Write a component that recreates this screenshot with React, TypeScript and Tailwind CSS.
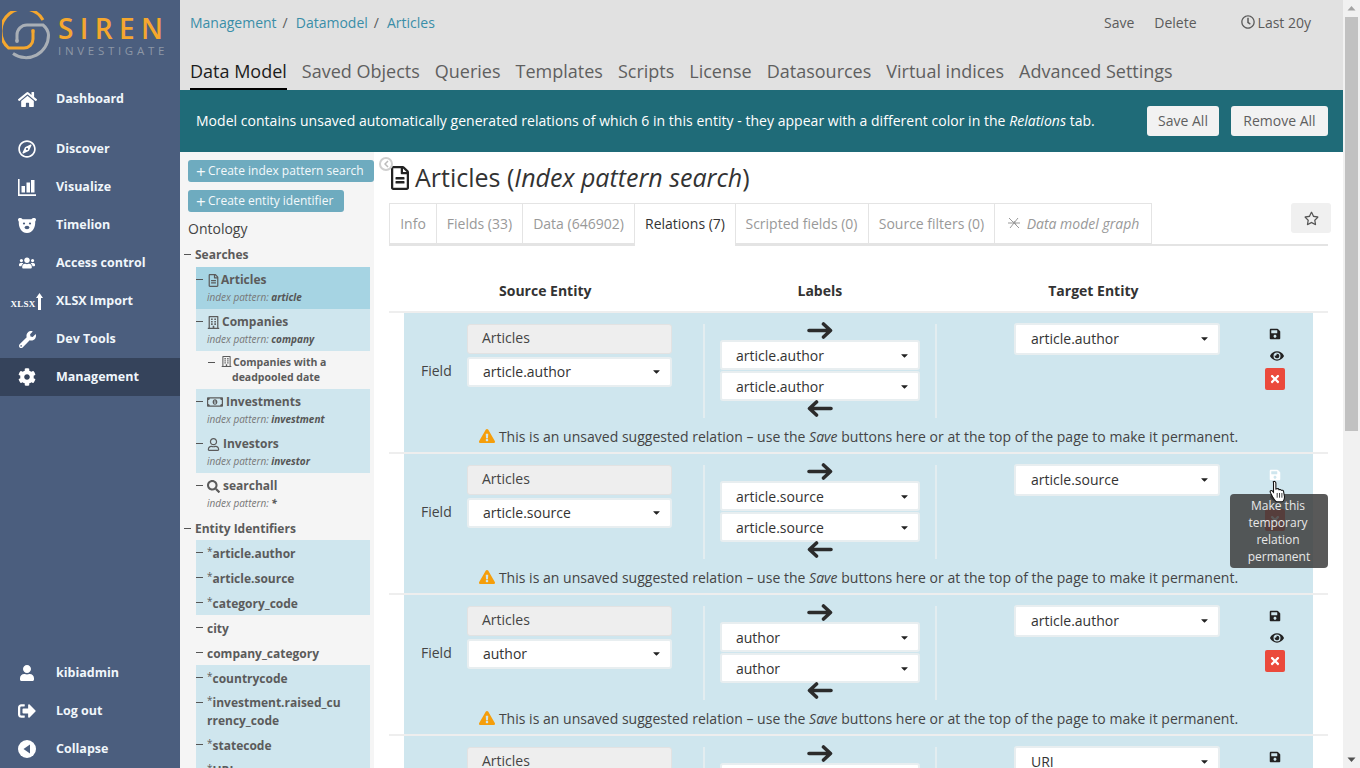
import {
  FaCaretDown,
  FaCog,
  FaExclamationTriangle,
  FaEye,
  FaHome,
  FaRegBuilding,
  FaRegClock,
  FaRegCompass,
  FaRegFileAlt,
  FaRegMoneyBillAlt,
  FaRegStar,
  FaRegUser,
  FaSave,
  FaSearch,
  FaSignOutAlt,
  FaTimes,
  FaUser,
  FaUsers,
  FaWrench,
} from "react-icons/fa";
import type { ReactNode } from "react";

function BarsIcon() {
  return (
    <svg width="18" height="17" viewBox="0 0 18 17" fill="#fff">
      <path d="M0 0h1.600v15.200H18V17H0z" />
      <rect x="3.500" y="7" width="3.500" height="6.500" />
      <rect x="8.500" y="3.500" width="3.500" height="10" />
      <rect x="13" y="1" width="3.500" height="12.500" />
    </svg>
  );
}

function BearIcon() {
  return (
    <svg width="18" height="15" viewBox="0 0 18 15" fill="#fff">
      <path d="M0 1.500C0 .5 1 0 2 0c1 0 2 .6 2.600 1.200h8.800C14 .6 15 0 16 0c1 0 2 .5 2 1.500 0 1-.6 1.600-.8 2.200.3 5-2.200 11.300-8.200 11.300S.5 8.700.8 3.700C.6 3.100 0 2.500 0 1.500z" />
      <circle cx="6" cy="5.500" r="1.100" fill="#4b5e7e" />
      <circle cx="12" cy="5.500" r="1.100" fill="#4b5e7e" />
      <ellipse cx="9" cy="9.500" rx="2.400" ry="1.700" fill="#4b5e7e" />
    </svg>
  );
}

function CollapseIcon() {
  return (
    <svg width="18" height="18" viewBox="0 0 18 18">
      <circle cx="9" cy="9" r="9" fill="#fff" />
      <path d="M12 4.500v9L5.500 9z" fill="#4b5e7e" />
    </svg>
  );
}

function XlsxIcon() {
  return (
    <span className="flex items-end">
      <span className="font-['Liberation_Serif',serif] text-[9px] leading-[12px] font-bold tracking-[0.2px] text-white">
        XLSX
      </span>
      <svg width="7" height="17" viewBox="0 0 7 17" fill="#fff" className="ml-px">
        <path d="M3.500 0 7 5H5v12H2V5H0z" />
      </svg>
    </span>
  );
}

function SirenLogo() {
  return (
    <div className="flex h-[80px] items-start pl-[2px] pt-[11px]">
      <svg width="49" height="49" viewBox="0 0 49 49" fill="none" className="shrink-0">
        <path d="M41 9A22.500 22.500 0 1 0 6.500 37H22a9 9 0 0 0 9-9v-7" stroke="#f5a72e" strokeWidth="3" />
        <circle cx="31" cy="20" r="1.900" fill="#f5a72e" />
        <path d="M15 30v-6a10 10 0 0 1 10-10h16q5 4 5.500 10A22.500 22.500 0 0 1 11 42.500" stroke="#a9afb6" strokeWidth="3" />
        <circle cx="15" cy="30" r="1.900" fill="#a9afb6" />
      </svg>
      <div className="ml-[7px] flex flex-col pt-[1px]">
        <span className="text-[28px] leading-[32px] font-semibold tracking-[6.400px] text-[#f5a72e]">
          SIREN
        </span>
        <span className="text-[11.500px] leading-[14px] tracking-[3.700px] text-[#8d97a6]">
          INVESTIGATE
        </span>
      </div>
    </div>
  );
}

function NavItem({ icon, label, active }: { icon: ReactNode; label: string; active?: boolean }) {
  return (
    <div className={`flex h-[38px] items-center text-[12.500px] font-bold text-[#f0f6fb] ${active ? "bg-[#35435b]" : ""}`}>
      <span className="flex w-[56px] shrink-0 justify-center pr-[2px]">{icon}</span>
      <span>{label}</span>
    </div>
  );
}

function Sidebar() {
  return (
    <aside className="flex h-full w-[180px] shrink-0 flex-col justify-between bg-[#4b5e7e]">
      <div>
        <SirenLogo />
        <NavItem icon={<FaHome size={19} color="#fff" />} label="Dashboard" />
        <div className="h-[12px]" />
        <NavItem icon={<FaRegCompass size={18} color="#fff" />} label="Discover" />
        <NavItem icon={<BarsIcon />} label="Visualize" />
        <NavItem icon={<BearIcon />} label="Timelion" />
        <NavItem icon={<FaUsers size={16} color="#fff" />} label="Access control" />
        <NavItem icon={<XlsxIcon />} label="XLSX Import" />
        <NavItem icon={<FaWrench size={17} color="#fff" />} label="Dev Tools" />
        <NavItem icon={<FaCog size={18} color="#fff" />} label="Management" active />
      </div>
      <div>
        <NavItem icon={<FaUser size={16} color="#fff" />} label="kibiadmin" />
        <NavItem icon={<FaSignOutAlt size={18} color="#fff" />} label="Log out" />
        <NavItem icon={<CollapseIcon />} label="Collapse" />
      </div>
    </aside>
  );
}

function TopBar() {
  const tabs = ["Saved Objects", "Queries", "Templates", "Scripts", "License", "Datasources", "Virtual indices", "Advanced Settings"];
  return (
    <div className="h-[90px] shrink-0 bg-[#e1e1e1] pl-[10px]">
      <div className="flex h-[45px] items-center pb-px text-[14px] text-[#5b5b5b]">
        <span className="text-[#3a8ea8]">Management</span>
        <span className="ml-[6px]">/</span>
        <span className="ml-[8px] text-[#3a8ea8]">Datamodel</span>
        <span className="ml-[6px]">/</span>
        <span className="ml-[8px] text-[#3a8ea8]">Articles</span>
        <span className="ml-auto">Save</span>
        <span className="ml-[20px]">Delete</span>
        <span className="ml-[44px] flex items-center gap-[3px]">
          <FaRegClock size={14} />
          Last 20y
        </span>
        <span className="w-[32px]" />
      </div>
      <div className="mt-[12px] flex gap-[15px] text-[18px] leading-[28px] text-[#5f5f5f]">
        <span className="relative text-[#1c1c1c]">
          Data Model
          <span className="absolute -bottom-[5px] left-0 h-[2px] w-full bg-black" />
        </span>
        {tabs.map((t) => (
          <span key={t}>{t}</span>
        ))}
      </div>
    </div>
  );
}

function Banner() {
  return (
    <div className="flex h-[62px] shrink-0 items-center justify-between bg-[#1f6b78] pl-[16px] pr-[15px] text-[14px] text-white">
      <span className="-mt-[2px] tracking-[0.03px]">
        Model contains unsaved automatically generated relations of which 6 in this entity - they appear with a different color in the <i>Relations</i> tab.
      </span>
      <div className="flex gap-[12px] text-[#5f5f5f]">
        <span className="flex h-[30px] w-[72px] items-center justify-center rounded-[3px] bg-[#f2f2f2] pb-[2px]">Save All</span>
        <span className="flex h-[30px] w-[97px] items-center justify-center rounded-[3px] bg-[#f2f2f2] pb-[2px]">Remove All</span>
      </div>
    </div>
  );
}

function Dash({ className = "" }: { className?: string }) {
  return <span className={`absolute h-px w-[7px] bg-[#555] ${className}`} />;
}

function SearchItem({
  icon,
  label,
  pattern,
  tone,
}: {
  icon: ReactNode;
  label: string;
  pattern: string;
  tone: string;
}) {
  return (
    <div className={`relative h-[42px] pl-[11px] pt-[3px] ${tone}`}>
      <Dash className="left-0 top-[12px]" />
      <div className="flex h-[20px] items-center gap-[1px] text-[12px] font-bold text-[#5b5b5b]">
        {icon}
        <span>{label}</span>
      </div>
      <div className="text-[10px] leading-[14px] italic text-[#777]">
        index pattern: <b className="text-[#555]">{pattern}</b>
      </div>
    </div>
  );
}

function IdItem({ label, star, tone, tall }: { label: string; star?: boolean; tone?: string; tall?: boolean }) {
  return (
    <div className={`relative whitespace-pre-line pl-[11px] text-[12px] font-bold leading-[17px] text-[#5b5b5b] ${tall ? "h-[42px] pt-[4px]" : "h-[25px] pt-[5px]"} ${tone ?? ""}`}>
      <Dash className="left-0 top-[12px]" />
      {star && <span className="relative -top-[3px] text-[10px] font-normal">*</span>}
      {label}
    </div>
  );
}

function Ontology() {
  const blue = "bg-[#cfe6ee]";
  return (
    <div className="h-full w-[194px] shrink-0 overflow-hidden bg-[#f5f5f5] pl-[8px] pt-[8px] text-[12px]">
      <div className="flex h-[22px] w-[186px] items-center rounded-[3px] bg-[#6eabbf] pl-[8px] text-[#f4f9fb]">
        <span className="mr-[3px] w-[9px] text-[17px] leading-none">+</span>Create index pattern search
      </div>
      <div className="mt-[8px] flex h-[22px] w-[156px] items-center rounded-[3px] bg-[#6eabbf] pl-[8px] text-[#f4f9fb]">
        <span className="mr-[3px] w-[9px] text-[17px] leading-none">+</span>Create entity identifier
      </div>
      <div className="mt-[7px] h-[20px] text-[14px] leading-[20px] text-[#444]">Ontology</div>
      <div className="relative mt-[6px] h-[22px] pl-[7px] text-[12px] leading-[19px] font-bold text-[#5b5b5b]">
        <Dash className="-left-[4px] top-[9px]" />
        Searches
      </div>
      <div className="ml-[8px] w-[174px]">
        <SearchItem tone="bg-[#a6d4e3]" icon={<FaRegFileAlt size={13} />} label="Articles" pattern="article" />
        <SearchItem tone={blue} icon={<FaRegBuilding size={13} className="mr-px" />} label="Companies" pattern="company" />
        <div className="relative h-[38px] pl-[25px] pt-[4px] text-[10.500px] leading-[15px] font-bold text-[#5b5b5b]">
          <Dash className="left-[12px] top-[11px]" />
          <FaRegBuilding size={11} className="mr-px inline align-[-1px]" />
          Companies with a
          <div className="pl-[11px]">deadpooled date</div>
        </div>
        <SearchItem tone={blue} icon={<FaRegMoneyBillAlt size={16} className="mr-[2px]" />} label="Investments" pattern="investment" />
        <SearchItem tone={blue} icon={<FaRegUser size={13} className="mr-[2px]" />} label="Investors" pattern="investor" />
        <SearchItem tone="" icon={<FaSearch size={13} className="mr-[2px]" />} label="searchall" pattern="*" />
      </div>
      <div className="relative mt-[4px] h-[21px] pl-[7px] text-[12px] leading-[20px] font-bold text-[#5b5b5b]">
        <Dash className="-left-[4px] top-[9px]" />
        Entity Identifiers
      </div>
      <div className="ml-[8px] w-[174px]">
        <IdItem star label="article.author" tone={blue} />
        <IdItem star label="article.source" tone={blue} />
        <IdItem star label="category_code" tone={blue} />
        <IdItem label="city" />
        <IdItem label="company_category" />
        <IdItem star label="countrycode" tone={blue} />
        <IdItem star tall label={"investment.raised_cu\nrrency_code"} tone={blue} />
        <IdItem star label="statecode" tone={blue} />
        <IdItem star label="URL" tone={blue} />
      </div>
    </div>
  );
}

function SelectBox({ value, className = "" }: { value: string; className?: string }) {
  return (
    <div className={`flex items-center justify-between rounded-[3px] border-2 border-[#e8eef0] bg-white pr-[8px] text-[#333] ${className}`}>
      <span>{value}</span>
      <FaCaretDown size={11} color="#222" />
    </div>
  );
}

function ArrowIcon({ left, className = "" }: { left?: boolean; className?: string }) {
  return (
    <svg width="26" height="17" viewBox="0 0 26 17" fill="none" stroke="#2b2b2b" strokeWidth="3.600" strokeLinecap="round" strokeLinejoin="round" className={`shrink-0 ${className}`}>
      {left ? <path d="M24 8.500H2.500M9.500 2l-7 6.500 7 6.500" /> : <path d="M2 8.500h21.500M16.500 2l7 6.500-7 6.500" />}
    </svg>
  );
}

function RelationRow({
  source,
  labelA,
  labelB,
  target,
  hovered,
}: {
  source: string;
  labelA: string;
  labelB: string;
  target: string;
  hovered?: boolean;
}) {
  return (
    <div className="h-[141px] shrink-0 border-b-2 border-[#eeeeee]">
      <div className="ml-[15px] h-[139px] w-[909px] bg-[#cfe6ee] text-[14px]">
        <div className="flex pt-[11px]">
          <div className="w-[63px] pl-[17px] pt-[36px] text-[#444]">Field</div>
          <div className="w-[205px]">
            <div className="flex h-[30px] items-center rounded-[3px] border border-[#e2e2e2] bg-[#eeeeee] pb-[3px] pl-[14px] text-[#444]">Articles</div>
            <SelectBox value={source} className="mt-[3px] h-[30px] pb-[2px] pl-[14px]" />
          </div>
          <div className="ml-[31px] flex h-[94px] w-[234px] justify-center border-x-2 border-[#e3edf0]">
            <div className="flex w-[200px] flex-col items-center">
              <ArrowIcon className="-mt-[2px]" />
              <SelectBox value={labelA} className="mt-[1px] h-[30px] w-full shrink-0 pl-[14px]" />
              <SelectBox value={labelB} className="mt-[1px] h-[30px] w-full shrink-0 pl-[14px]" />
              <ArrowIcon left className="-mt-[1px]" />
            </div>
          </div>
          <SelectBox value={target} className="ml-[77px] -mt-px h-[32px] w-[206px] pb-[2px] pl-[15px]" />
          <div className="ml-[44px] flex w-[22px] flex-col items-center">
            <FaSave size={12} color={hovered ? "#fff" : "#222"} className="mt-[4px]" />
            <FaEye size={14} color="#222" className="ml-[4px] mt-[9px]" />
            <span className="mt-[5px] flex h-[22px] w-[20px] items-center justify-center rounded-[2px] bg-[#eb4a3c]">
              <FaTimes size={12} color="#fff" />
            </span>
          </div>
        </div>
        <div className="mt-[8px] flex h-[20px] items-center justify-center text-[#444]">
          <FaExclamationTriangle size={16} color="#f59e0b" className="mr-[4px]" />
          <span className="tracking-[0.02px]">
            This is an unsaved suggested relation – use the <i>Save</i> buttons here or at the top of the page to make it permanent.
          </span>
        </div>
      </div>
    </div>
  );
}

function EntityPanel() {
  return (
    <div className="relative h-full min-w-0 flex-1 overflow-hidden bg-white px-[15px]">
      <span className="absolute left-[5px] top-[5px] flex h-[14px] w-[14px] items-center justify-center rounded-full border-2 border-[#cfcfcf] bg-white">
        <svg width="5" height="8" viewBox="0 0 5 8" fill="none" stroke="#bbb" strokeWidth="1.500">
          <path d="M4 1 1 4l3 3" />
        </svg>
      </span>
      <h1 className="flex h-[51px] items-center text-[25px] font-normal text-[#333]">
        <FaRegFileAlt size={24} color="#222" className="-ml-px mr-[3px]" />
        <span>
          Articles (<i>Index pattern search</i>)
        </span>
      </h1>
      <div className="relative flex h-[43px] items-stretch border-b-2 border-[#e4e4e4] text-[14px] text-[#999]">
        <span className="flex w-[47px] items-center justify-center border-y-1 border-l-1 border-[#e4e4e4] pb-[1px]">Info</span>
        <span className="flex w-[86px] items-center justify-center border-y-1 border-l-1 border-[#e4e4e4] pb-[1px]">Fields (33)</span>
        <span className="flex w-[112px] items-center justify-center border-y-1 border-l-1 border-[#e4e4e4] pb-[1px]">Data (646902)</span>
        <span className="-mb-[2px] flex w-[102px] items-center justify-center border-x-1 border-t-1 border-[#e4e4e4] bg-white pb-[3px] text-[#333]">Relations (7)</span>
        <span className="flex w-[133px] items-center justify-center border-y-1 border-r-1 border-[#e4e4e4] pb-[1px] pr-[1px]">Scripted fields (0)</span>
        <span className="flex w-[126px] items-center justify-center border-y-1 border-r-1 border-[#e4e4e4] pb-[1px]">Source filters (0)</span>
        <span className="flex w-[157px] items-center justify-center gap-[6px] border-y-1 border-r-1 border-[#e4e4e4] pb-[1px] italic">
          <svg width="14" height="14" viewBox="0 0 14 14" stroke="#999" strokeWidth="1" fill="none">
            <path d="M2 2l10 10M11 2L3 12M1 7h12M7 5l2 4" />
          </svg>
          Data model graph
        </span>
        <span className="absolute -right-[3px] top-0 flex h-[30px] w-[40px] items-center justify-center rounded-[3px] bg-[#f0f0f0]">
          <FaRegStar size={15} color="#555" />
        </span>
      </div>
      <div className="flex h-[67px] items-end border-b-2 border-[#eeeeee] pb-[10px] text-[14px] font-bold text-[#333]">
        <span className="ml-[110px]">Source Entity</span>
        <span className="ml-[206px]">Labels</span>
        <span className="ml-[206px]">Target Entity</span>
      </div>
      <div className="flex flex-col">
        <RelationRow source="article.author" labelA="article.author" labelB="article.author" target="article.author" />
        <RelationRow hovered source="article.source" labelA="article.source" labelB="article.source" target="article.source" />
        <RelationRow source="author" labelA="author" labelB="author" target="article.author" />
        <RelationRow source="" labelA="" labelB="" target="URI" />
      </div>
      <div className="absolute left-[856px] top-[342px] flex h-[74px] w-[98px] flex-col items-center justify-center rounded-[4px] bg-[#3c3c3c]/85 pr-[2px] text-center text-[12px] leading-[17px] text-[#e8e8e8]">
        <span>Make this</span>
        <span>temporary</span>
        <span>relation</span>
        <span className="pl-[2px]">permanent</span>
      </div>
      <svg className="absolute left-[895px] top-[328px]" width="18" height="23" viewBox="0 0 15 19.500">
        <path
          d="M3.500 1.500c1-.8 2.200 0 2.200 1.200v5l1-.3c.9-.2 1.500.2 1.700.8.800-.4 1.500-.2 1.900.6.800-.4 1.700 0 1.900.8l.8 4.500c.1 2-1 4.400-2 4.400H6.500c-1 0-2-2-3.500-4L1 10.500c-.6-1.200.8-2 1.700-1.200l1 1.200V2.500z"
          fill="#fff"
          stroke="#111"
          strokeWidth="0.900"
        />
        <path d="M6.800 11v4M8.800 11v4M10.800 11v4" stroke="#111" strokeWidth="0.700" />
      </svg>
    </div>
  );
}

function Scrollbar() {
  return (
    <div className="flex h-full w-[17px] shrink-0 flex-col items-center justify-between bg-[#f1f1f1]">
      <div className="flex w-[13px] flex-col items-center">
        <svg width="9" height="17" viewBox="0 0 9 17" fill="#a3a3a3">
          <path d="M4.500 6 8.500 10.500H.5z" />
        </svg>
        <div className="h-[414px] w-[13px] bg-[#c1c1c1]" />
      </div>
      <svg width="9" height="17" viewBox="0 0 9 17" fill="#505050">
        <path d="M.5 6.500h8L4.500 11z" />
      </svg>
    </div>
  );
}

export default function App() {
  return (
    <div className="flex h-screen w-full overflow-hidden bg-white font-['Open_Sans',sans-serif]">
      <Sidebar />
      <div className="flex min-w-0 flex-1 flex-col">
        <TopBar />
        <Banner />
        <div className="flex min-h-0 flex-1">
          <Ontology />
          <EntityPanel />
        </div>
      </div>
      <Scrollbar />
    </div>
  );
}
